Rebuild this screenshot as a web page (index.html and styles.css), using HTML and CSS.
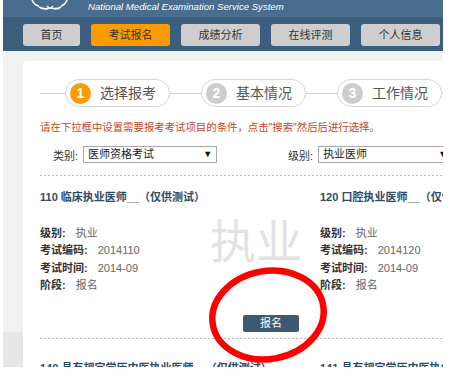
FILE: index.html
```html
<!DOCTYPE html>
<html lang="zh-CN">
<head>
<meta charset="utf-8">
<title>考试报名</title>
<link rel="stylesheet" href="styles.css">
</head>
<body>
<div class="shot">
  <header class="brand">
    <svg class="brand-logo" width="40" height="17" viewBox="0 0 40 17" aria-hidden="true">
      <path d="M2 0 C4 4 6 6 9 6" fill="none" stroke="#fff" stroke-width="1.6"/>
      <path d="M9 7 C13 9 17 9 19 8" fill="none" stroke="#fff" stroke-width="1.8"/>
      <path d="M21 8 C24 9 28 9 31 7" fill="none" stroke="#fff" stroke-width="1.8"/>
      <path d="M31 6 C34 5 36 3 37 0" fill="none" stroke="#fff" stroke-width="1.6"/>
      <path d="M17 6 L20 8.5 L23 6" fill="none" stroke="#fff" stroke-width="1.2"/>
    </svg>
    <span class="brand-en">National Medical Examination Service System</span>
  </header>

  <nav class="nav">
    <a class="nav-item nav-home" href="#">首页</a>
    <a class="nav-item is-active" href="#">考试报名</a>
    <a class="nav-item" href="#">成绩分析</a>
    <a class="nav-item" href="#">在线评测</a>
    <a class="nav-item" href="#">个人信息</a>
  </nav>

  <main class="page">
    <section class="panel">
      <div class="steps">
        <span class="step-line lead"></span>
        <div class="step is-current"><span class="step-num">1</span><span class="step-label">选择报考</span></div>
        <span class="step-line"></span>
        <div class="step"><span class="step-num">2</span><span class="step-label">基本情况</span></div>
        <span class="step-line"></span>
        <div class="step"><span class="step-num">3</span><span class="step-label">工作情况</span></div>
        <span class="step-line"></span>
      </div>

      <p class="hint">请在下拉框中设置需要报考考试项目的条件，点击"搜索"然后后进行选择。</p>

      <div class="filters">
        <div class="filter">
          <span class="filter-label">类别:</span>
          <span class="select"><span class="select-value">医师资格考试</span><span class="select-arrow">▼</span></span>
        </div>
        <div class="filter">
          <span class="filter-label">级别:</span>
          <span class="select"><span class="select-value">执业医师</span><span class="select-arrow">▼</span></span>
        </div>
      </div>

      <div class="divider"></div>

      <div class="cards">
        <article class="card">
          <span class="watermark">执业</span>
          <h3 class="card-title">110 临床执业医师__（仅供测试）</h3>
          <dl class="card-info">
            <div class="info-row"><dt>级别:</dt><dd>执业</dd></div>
            <div class="info-row"><dt>考试编码:</dt><dd>2014110</dd></div>
            <div class="info-row"><dt>考试时间:</dt><dd>2014-09</dd></div>
            <div class="info-row"><dt>阶段:</dt><dd>报名</dd></div>
          </dl>
          <div class="card-actions"><a class="btn" href="#">报名</a></div>
        </article>
        <article class="card">
          <h3 class="card-title">120 口腔执业医师__（仅供测试）</h3>
          <dl class="card-info">
            <div class="info-row"><dt>级别:</dt><dd>执业</dd></div>
            <div class="info-row"><dt>考试编码:</dt><dd>2014120</dd></div>
            <div class="info-row"><dt>考试时间:</dt><dd>2014-09</dd></div>
            <div class="info-row"><dt>阶段:</dt><dd>报名</dd></div>
          </dl>
          <div class="card-actions"><a class="btn" href="#">报名</a></div>
        </article>
      </div>

      <div class="divider after-cards"></div>

      <div class="cards next">
        <article class="card">
          <h3 class="card-title">140 具有规定学历中医执业医师__（仅供测试）</h3>
        </article>
        <article class="card">
          <h3 class="card-title">141 具有规定学历中医执业助理医师__（仅供测试）</h3>
        </article>
      </div>
    </section>
  </main>

  <svg class="annot" width="130" height="110" viewBox="0 0 130 110" aria-hidden="true">
    <ellipse cx="65" cy="55" rx="56" ry="44" transform="rotate(-10 65 55)" fill="none" stroke="#ff0000" stroke-width="6.5"/>
  </svg>
</div>
</body>
</html>
```

FILE: styles.css
```css
body {
  margin: 0;
  background: #fff;
  font-family: "Liberation Sans", "Noto Sans CJK SC", sans-serif;
}

.shot {
  position: relative;
  width: 440px;
  height: 367px;
  margin-left: 3px;
  overflow: hidden;
  background: #efefef;
}

/* header */
.brand {
  height: 17px;
  background: #486d8e;
  display: flex;
  align-items: flex-start;
}
.brand-logo {
  display: block;
  margin-left: 27px;
  flex: none;
}
.brand-en {
  margin-left: 18px;
  font-style: italic;
  font-size: 9.6px;
  line-height: 14px;
  color: #fff;
  white-space: nowrap;
}

/* nav */
.nav {
  height: 34px;
  box-sizing: border-box;
  padding: 7px 0 0 20px;
  background: #3b5e7d;
  display: flex;
  gap: 11px;
}
.nav-item {
  flex: none;
  width: 79px;
  height: 22px;
  line-height: 22px;
  text-align: center;
  font-size: 11px;
  color: #333;
  background: #cecece;
  border-radius: 3px;
  text-decoration: none;
}
.nav-home { width: 57px; }
.nav-item.is-active { background: #fa9b00; }

/* page */
.page {
  height: 316px;
  box-sizing: border-box;
  padding: 10px 0 0 20px;
  background: linear-gradient(to bottom, #f1f1f1 0, #f1f1f1 281px, #e6e6e6 281px);
}
.panel {
  width: 600px;
  height: 100%;
  box-sizing: border-box;
  padding: 18px 0 0 17px;
  background: #fff;
  border-radius: 4px 0 0 0;
}

/* steps */
.steps {
  display: flex;
  align-items: center;
  height: 28px;
}
.step-line {
  flex: none;
  width: 31px;
  height: 1px;
  background: #cfcfcf;
}
.step-line.lead { width: 25px; }
.step {
  flex: none;
  box-sizing: border-box;
  width: 105px;
  height: 28px;
  padding-left: 4px;
  border: 1px solid #d6d6d6;
  border-radius: 14px;
  display: flex;
  align-items: center;
  gap: 9px;
}
.step-num {
  width: 21px;
  height: 21px;
  border-radius: 50%;
  background: #cdcdcd;
  color: #fff;
  font-weight: bold;
  font-size: 14px;
  line-height: 21px;
  text-align: center;
}
.step.is-current .step-num { background: #fa9b00; }
.step-label {
  font-size: 14px;
  line-height: 1;
  color: #555;
  white-space: nowrap;
}

/* hint */
.hint {
  margin: 14px 0 0;
  font-size: 10.4px;
  line-height: 14px;
  color: #c1471b;
  white-space: nowrap;
}

/* filters */
.filters {
  margin-top: 11px;
  padding-left: 13px;
  display: flex;
  align-items: center;
  gap: 71px;
}
.filter {
  display: flex;
  align-items: center;
  gap: 5px;
  font-size: 11px;
  color: #333;
}
.select {
  box-sizing: border-box;
  width: 134px;
  height: 17px;
  padding: 0 4px 0 4px;
  border: 1px solid #a8a8a8;
  background: #fff;
  display: flex;
  align-items: center;
  justify-content: space-between;
  color: #222;
  line-height: 15px;
}
.select-arrow {
  font-size: 9px;
  color: #111;
}

/* dividers */
.divider {
  margin-top: 12px;
  height: 1px;
  background: repeating-linear-gradient(to right, #b9b9b9 0, #b9b9b9 2px, transparent 2px, transparent 4px);
}
.divider.after-cards { margin-top: 6px; }

/* cards */
.cards { display: flex; }
.card {
  position: relative;
  flex: none;
  width: 280px;
  padding-top: 14px;
}
.cards.next .card { padding-top: 22px; }
.card-title {
  margin: 0;
  font-size: 11px;
  font-weight: bold;
  line-height: 14px;
  color: #2e4b65;
  white-space: nowrap;
}
.card-info {
  margin: 20.5px 0 0;
  font-size: 11px;
  line-height: 17.5px;
}
.info-row { display: flex; }
.info-row dt {
  font-weight: bold;
  color: #333;
}
.info-row dd {
  margin: 0 0 0 10px;
  color: #666;
}
.card-actions {
  margin-top: 20.5px;
  padding-right: 21px;
  display: flex;
  justify-content: flex-end;
}
.btn {
  width: 56px;
  height: 17px;
  line-height: 17px;
  background: #3c5a73;
  color: #fff;
  font-size: 11px;
  text-align: center;
  border-radius: 2px;
  text-decoration: none;
}
.watermark {
  position: absolute;
  left: 170px;
  top: 39px;
  font-family: "Noto Sans CJK SC", sans-serif;
  font-size: 46px;
  font-weight: 400;
  line-height: 1;
  color: #e2e2e2;
}

/* annotation overlay */
.annot {
  position: absolute;
  left: 200px;
  top: 260px;
}
```
